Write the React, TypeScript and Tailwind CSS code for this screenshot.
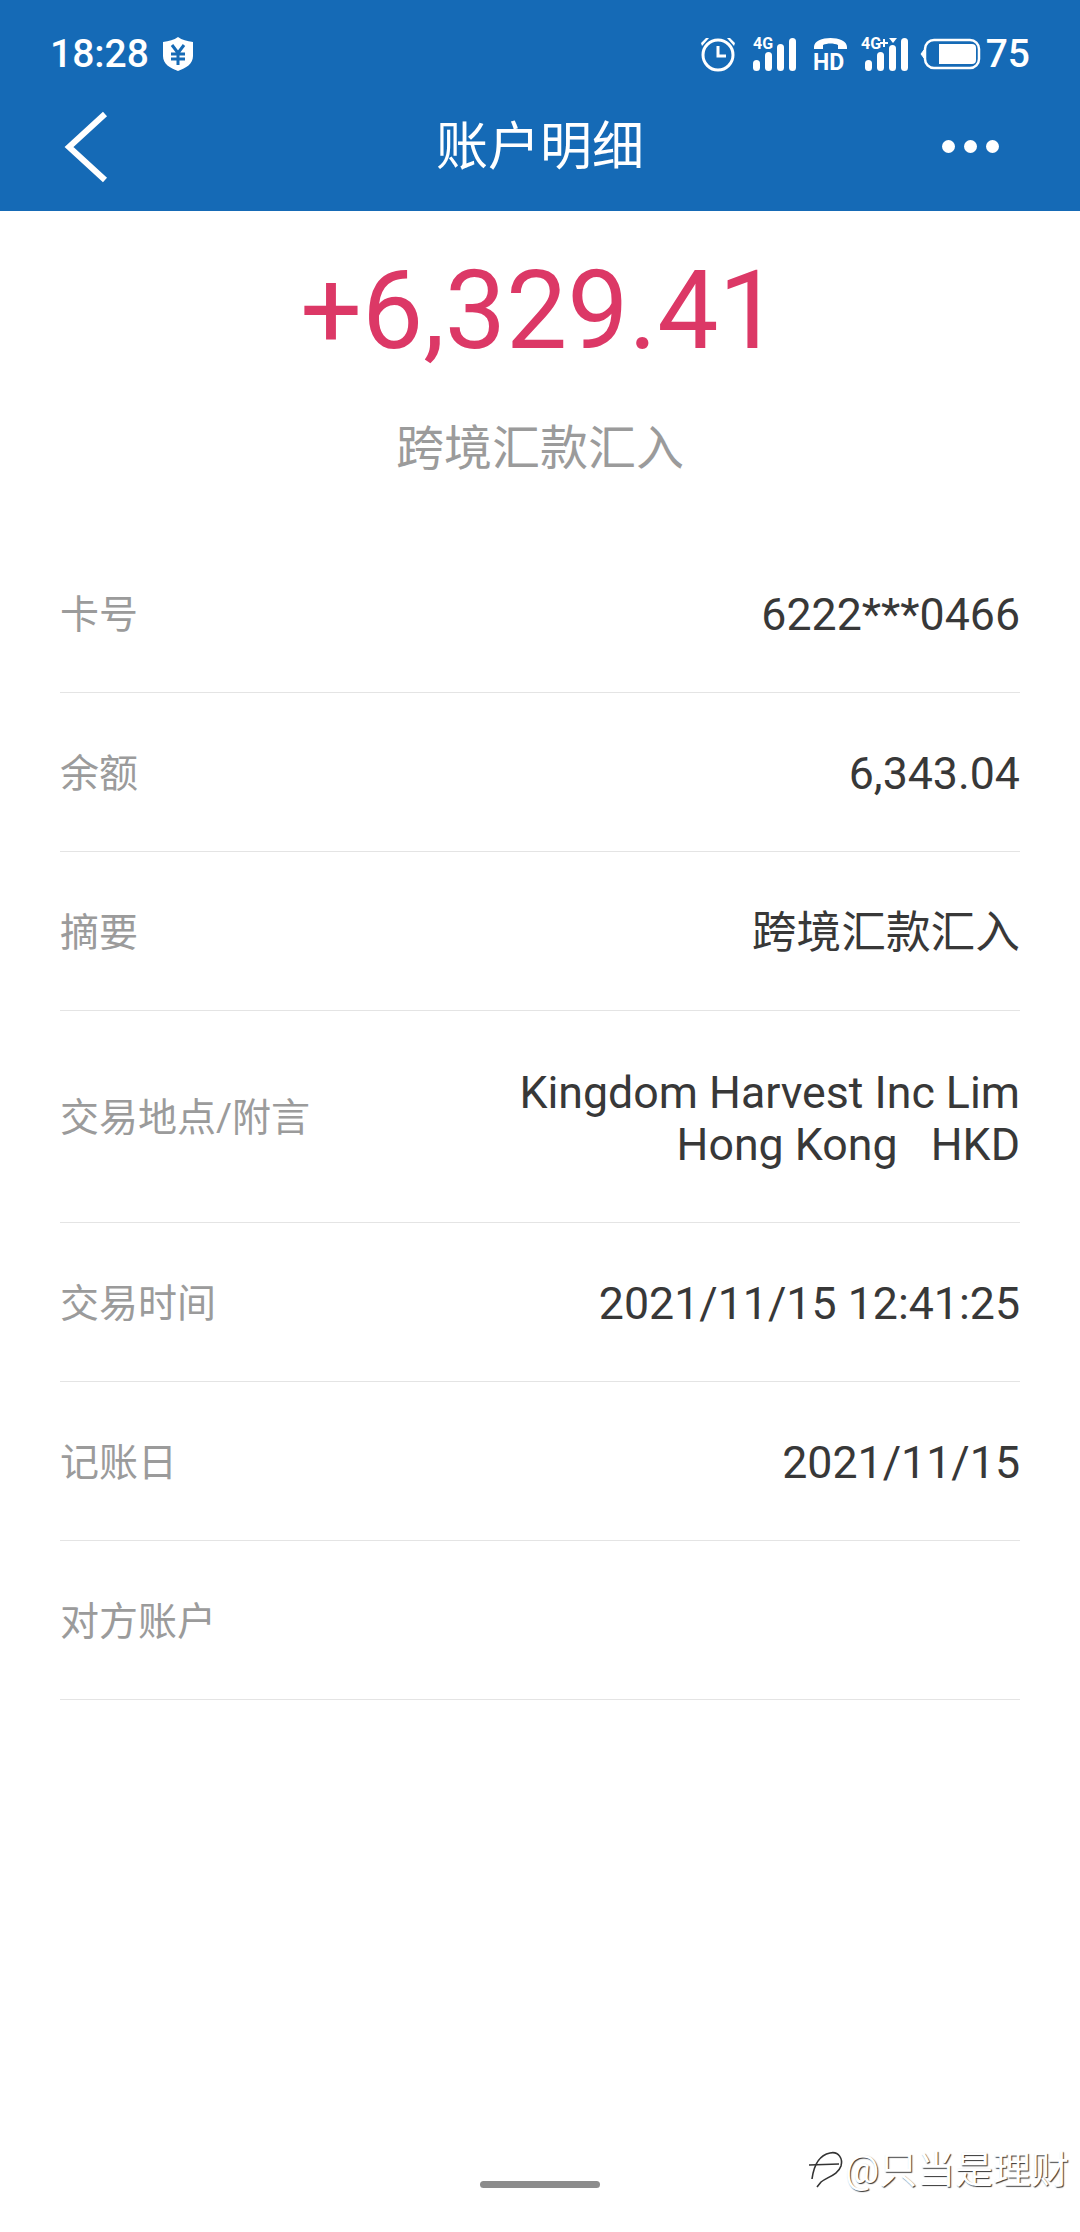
const rows = [
  { label: '卡号', value: ['6222***0466'] },
  { label: '余额', value: ['6,343.04'] },
  { label: '摘要', value: ['跨境汇款汇入'] },
  { label: '交易地点/附言', value: ['Kingdom Harvest Inc Lim', 'Hong Kong\u00a0\u00a0\u00a0HKD'], tall: true },
  { label: '交易时间', value: ['2021/11/15 12:41:25'] },
  { label: '记账日', value: ['2021/11/15'] },
  { label: '对方账户', value: [] },
];

function StatusIcons() {
  return (
    <div className="flex items-center text-white">
      {/* alarm */}
      <svg width="36" height="36" viewBox="0 0 36 36">
        <circle cx="18" cy="19" r="15" fill="none" stroke="#fff" strokeWidth="3" />
        <path d="M18 10v10h8" fill="none" stroke="#fff" strokeWidth="3" />
        <path d="M1 7l5-5 3 0-7 8zM35 7l-5-5-3 0 7 8z" fill="#fff" />
      </svg>
      {/* 4G signal */}
      <svg width="44" height="36" viewBox="0 0 44 36" className="ml-[17px] overflow-visible" fill="#fff">
        <text x="0" y="13" fontSize="16" fontWeight="700" fontFamily="Roboto, sans-serif">4G</text>
        <rect x="0" y="24" width="7" height="11" rx="3.5" />
        <rect x="12" y="16" width="7" height="19" rx="3.5" />
        <rect x="24" y="8" width="7" height="27" rx="3.5" />
        <rect x="36" y="2" width="7" height="33" rx="3.5" />
      </svg>
      {/* HD call */}
      <svg width="36" height="36" viewBox="0 0 36 36" className="ml-[16px] overflow-visible" fill="#fff">
        <path d="M1 11c0-12 33-12 33 0v2h-9V9c-4-2-11-2-15 0v4H1z" />
        <text x="0" y="34" fontSize="23" fontWeight="700" fontFamily="Roboto, sans-serif">HD</text>
      </svg>
      {/* 4G+ signal */}
      <svg width="48" height="36" viewBox="0 0 48 36" className="ml-[12px] overflow-visible" fill="#fff">
        <text x="0" y="13" fontSize="16" fontWeight="700" fontFamily="Roboto, sans-serif">4G</text>
        <path d="M19 6h3V3h2v3h3v2h-3v3h-2V8h-3z" />
        <path d="M28 2h8l-4 5z" />
        <rect x="4" y="24" width="7" height="11" rx="3.5" />
        <rect x="16" y="16" width="7" height="19" rx="3.5" />
        <rect x="28" y="9" width="7" height="26" rx="3.5" />
        <rect x="40" y="2" width="7" height="33" rx="3.5" />
      </svg>
      {/* battery */}
      <svg width="62" height="32" viewBox="0 0 62 32" className="ml-[11px]">
        <path d="M1 16l3-4v8z" fill="#fff" stroke="#fff" strokeWidth="1" />
        <rect x="5" y="2" width="54" height="28" rx="9" fill="none" stroke="#fff" strokeWidth="2.5" />
        <path d="M19 6h33a4 4 0 0 1 4 4v12a4 4 0 0 1-4 4H19z" fill="#fff" />
      </svg>
      <span className="ml-[4px] text-[39px] font-medium leading-none">75</span>
    </div>
  );
}

export default function App() {
  return (
    <div className="relative w-[1080px] h-[2232px] bg-white overflow-hidden font-['Roboto','Noto_Sans_CJK_SC',sans-serif]">
      <header className="h-[211px] bg-[#156ab6] text-white">
        <div className="h-[106px] flex items-center justify-between pl-[50px] pr-[50px] pt-[2px]">
          <div className="flex items-center gap-[14px]">
            <span className="text-[39px] font-medium leading-none">18:28</span>
            <svg width="30" height="34" viewBox="0 0 30 34">
              <path d="M15 0c4 3 9 4 15 5v14c0 8-7 12-15 15C7 31 0 27 0 19V5c6-1 11-2 15-5z" fill="#fff" />
              <path d="M9 8l6 8 6-8M8 17h14M8 22h14M15 16v12" fill="none" stroke="#156ab6" strokeWidth="3" />
            </svg>
          </div>
          <StatusIcons />
        </div>
        <div className="relative h-[105px] flex items-center justify-center">
          <svg width="46" height="72" viewBox="0 0 46 72" className="absolute left-[63px] top-[5px]">
            <path d="M42 3L6 36l36 33" fill="none" stroke="#fff" strokeWidth="6" />
          </svg>
          <h1 className="text-[52px] font-normal leading-none mb-[22px]">账户明细</h1>
          <div className="absolute left-[942px] top-[34px] flex gap-[9px]">
            <span className="w-[13px] h-[13px] rounded-full bg-white" />
            <span className="w-[13px] h-[13px] rounded-full bg-white" />
            <span className="w-[13px] h-[13px] rounded-full bg-white" />
          </div>
        </div>
      </header>

      <div className="flex flex-col items-center pb-[47px]">
        <div className="h-[200px] flex items-center text-[109px] leading-none text-[#dc3866]">+6,329.41</div>
        <div className="h-[76px] flex items-center text-[48px] leading-none text-[#9b9b9b]">跨境汇款汇入</div>
      </div>

      <div className="mx-[60px]">
        {rows.map((row) => (
          <div
            key={row.label}
            className={`flex items-center justify-between border-b border-[#e4e4e4] pt-[4px] ${row.tall ? 'h-[212px]' : 'h-[159px]'}`}
          >
            <span className="text-[39px] text-[#9b9b9b]">{row.label}</span>
            <div className="text-right text-[44.7px] leading-[52px] text-[#383838]">
              {row.value.map((line) => (
                <div key={line}>{line}</div>
              ))}
            </div>
          </div>
        ))}
      </div>

      <div className="absolute left-[480px] top-[2181px] w-[120px] h-[7px] rounded-full bg-[#8c8c8c]" />

      {/* watermark */}
      <div className="absolute left-[808px] top-[2148px] flex items-center text-white text-[38px] leading-none [text-shadow:1px_1px_1px_#333]">
        <svg width="36" height="44" viewBox="0 0 36 44" className="mr-[1px]">
          <path d="M4 31C6 16 12 7 22 5c9-2 13 6 11 13-3 9-14 11-20 16l-4 5" fill="none" stroke="#333" strokeWidth="1.6" />
          <path d="M1 17l30-1" fill="none" stroke="#333" strokeWidth="1.6" />
        </svg>
        <span>@只当是理财</span>
      </div>
    </div>
  );
}
